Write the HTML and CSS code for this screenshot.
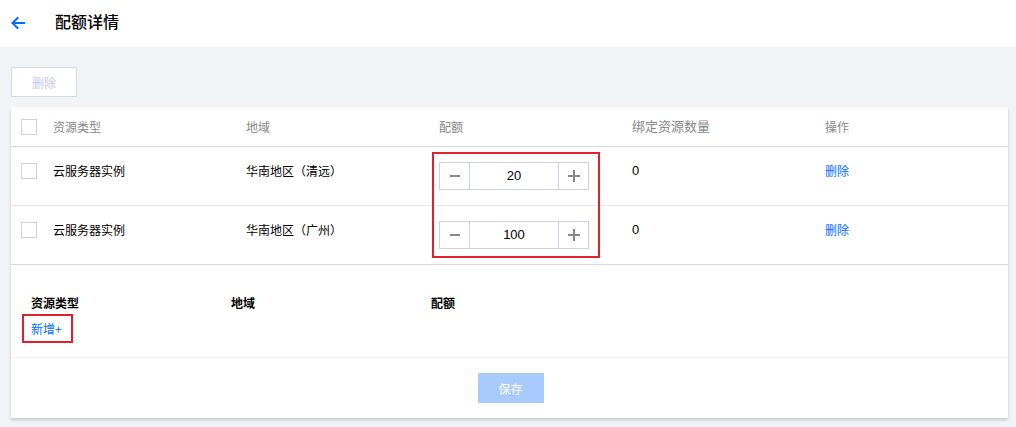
FILE: index.html
```html
<!DOCTYPE html>
<html lang="zh-CN">
<head>
<meta charset="utf-8">
<title>配额详情</title>
<link rel="stylesheet" href="styles.css">
</head>
<body>
<header class="topbar">
  <svg class="back" width="14" height="12" viewBox="0 0 14 12" aria-hidden="true">
    <path d="M6.5 1 L1.5 6 L6.5 11 M1.5 6 H13.5" fill="none" stroke="#006eff" stroke-width="2" stroke-linecap="square"/>
  </svg>
  <h1 class="title">配额详情</h1>
</header>
<main class="main">
  <button class="btn-ghost" disabled>删除</button>
  <section class="card">
    <div class="row row-head">
      <div class="cell"><span class="checkbox"></span></div>
      <div class="cell">资源类型</div>
      <div class="cell">地域</div>
      <div class="cell">配额</div>
      <div class="cell">绑定资源数量</div>
      <div class="cell">操作</div>
    </div>
    <div class="row row-body">
      <div class="cell"><span class="checkbox"></span></div>
      <div class="cell">云服务器实例</div>
      <div class="cell">华南地区（清远）</div>
      <div class="cell">
        <div class="stepper"><span class="step minus"></span><span class="value">20</span><span class="step plus"></span></div>
      </div>
      <div class="cell">0</div>
      <div class="cell"><a class="link">删除</a></div>
    </div>
    <div class="row row-body">
      <div class="cell"><span class="checkbox"></span></div>
      <div class="cell">云服务器实例</div>
      <div class="cell">华南地区（广州）</div>
      <div class="cell">
        <div class="stepper"><span class="step minus"></span><span class="value">100</span><span class="step plus"></span></div>
      </div>
      <div class="cell">0</div>
      <div class="cell"><a class="link">删除</a></div>
    </div>
    <div class="mark mark-quota"></div>
    <div class="add-section">
      <div class="add-head">
        <span>资源类型</span><span>地域</span><span>配额</span>
      </div>
      <a class="link add-link">新增+<span class="mark mark-add"></span></a>
    </div>
    <div class="footer">
      <button class="btn-primary" disabled>保存</button>
    </div>
  </section>
</main>
</body>
</html>
```
FILE: styles.css
```css
* { box-sizing: border-box; }
html, body { margin: 0; padding: 0; }
body {
  background: #f2f3f7;
  font-family: "Noto Sans CJK SC", "Liberation Sans", sans-serif;
  font-size: 12px;
  color: #000;
  width: 1016px;
  height: 427px;
  overflow: hidden;
}
.topbar {
  height: 47px;
  background: #fff;
  display: flex;
  align-items: center;
  padding-left: 11px;
}
.back { display: block; margin-top: -1px; }
.title {
  margin: 0 0 0 30px;
  font-size: 16px;
  font-weight: 500;
  line-height: 24px;
  color: #000;
  margin-top: -6px;
}
.main {
  padding: 20px 8px 0 11px;
}
.btn-ghost {
  display: block;
  width: 66px;
  height: 30px;
  border: 1px solid #d5d9e2;
  background: #fff;
  color: #c2cafa;
  font-family: inherit;
  font-size: 12px;
  padding: 0;
}
.card {
  position: relative;
  margin-top: 10px;
  background: #fff;
  box-shadow: 0 2px 3px rgba(0,0,0,0.18);
  height: 311px;
}
.row {
  display: grid;
  grid-template-columns: 42px 193px 193px 193px 193px 1fr;
  border-bottom: 1px solid #d6d9e0;
}
.row-head {
  height: 40px;
  align-items: center;
  color: #888;
}
.row-body {
  height: 59px;
  align-items: start;
  padding-top: 15px;
  color: #000;
}
.row-body + .row-body { border-bottom-color: #d6d9e0; }
.row-body:not(:last-of-type) {}
.cell { line-height: 18px; }
.cell:first-child { padding-left: 10px; display: flex; }
.row-body .cell:first-child { padding-top: 1px; }
.checkbox {
  display: block;
  width: 16px;
  height: 16px;
  border: 1px solid #cdd1da;
  background: #fff;
}
.row-head + .row-body { border-bottom-color: #e6e8ee; }
.link { color: #006eff; text-decoration: none; }
.stepper {
  display: flex;
  width: 150px;
  height: 28px;
  border: 1px solid #cdd2dc;
}
.step {
  position: relative;
  width: 30px;
  flex: none;
}
.step.plus { width: 30px; border-left: 1px solid #cdd2dc; }
.step.minus { border-right: 1px solid #cdd2dc; }
.step.minus::before,
.step.plus::before,
.step.plus::after {
  content: "";
  position: absolute;
  background: #888;
}
.step.minus::before { left: 10px; top: 12px; width: 10px; height: 2px; }
.step.plus::before { left: 9px; top: 12px; width: 12px; height: 2px; }
.step.plus::after { left: 14px; top: 7px; width: 2px; height: 12px; }
.value {
  flex: 1;
  text-align: center;
  line-height: 26px;
  font-family: "Liberation Sans", sans-serif;
  font-size: 13px;
}
.cell:nth-child(5) { font-family: "Liberation Sans", sans-serif; font-size: 13px; }
.mark {
  position: absolute;
  border: 2px solid #e0202a;
  pointer-events: none;
}
.mark-quota { left: 421px; top: 45px; width: 168px; height: 106px; }
.add-section {
  padding: 29px 20px 19px 20px;
  border-bottom: 1px solid #f0f1f4;
}
.add-head {
  display: grid;
  grid-template-columns: 200px 200px 200px;
  font-weight: 700;
  line-height: 18px;
  color: #000;
}
.add-link {
  position: relative;
  display: inline-block;
  margin-top: 8px;
  line-height: 18px;
}
.mark-add { left: -9px; top: -6px; width: 51px; height: 29px; }
.footer {
  display: flex;
  justify-content: center;
  padding: 15px 0 14px;
}
.btn-primary {
  width: 66px;
  height: 30px;
  border: 0;
  background: #a8cafd;
  color: #fff;
  font-family: inherit;
  font-size: 12px;
  padding: 0;
  margin-left: 2px;
}
```
